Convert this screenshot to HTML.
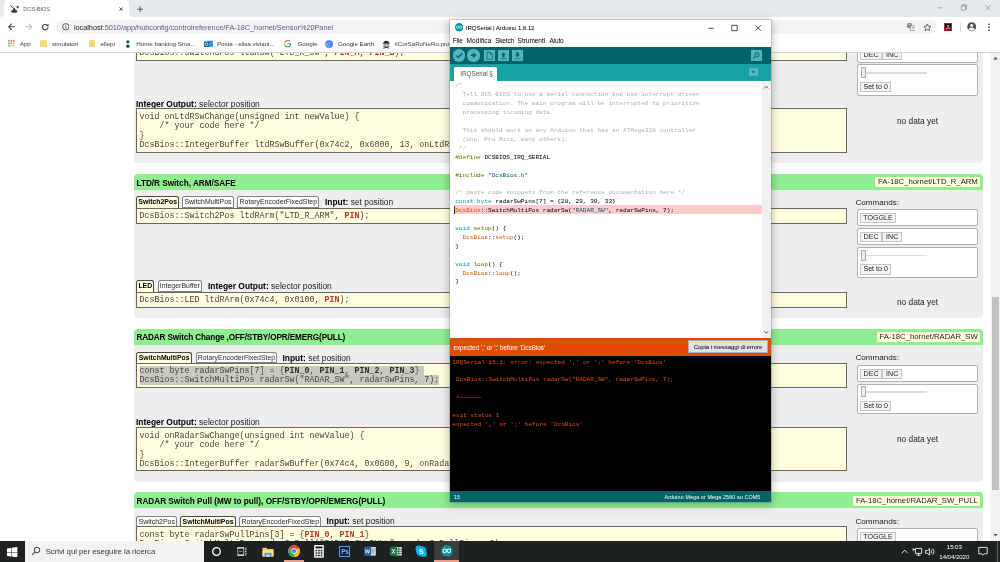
<!DOCTYPE html>
<html><head><meta charset="utf-8"><title>DCS-BIOS</title>
<style>
*{box-sizing:border-box;margin:0;padding:0}
html,body{width:1000px;height:562px;overflow:hidden;background:#fff;font-family:"Liberation Sans",sans-serif;}
body{position:relative;will-change:transform}
.abs{position:absolute}
/* ---------- chrome frame ---------- */
#tabstrip{position:absolute;left:0;top:0;width:1000px;height:17px;background:#e7eaed}
#tab{position:absolute;left:4.2px;top:0px;width:125px;height:17px;background:#fff;border-radius:4px 4px 0 0}
#tab:before,#tab:after{content:'';position:absolute;bottom:0;width:4px;height:4px;background:radial-gradient(circle at 0 0,#e7eaed 3.8px,#fff 4.2px)}
#tab:before{left:-4px}
#tab:after{right:-4px;background:radial-gradient(circle at 100% 0,#e7eaed 3.8px,#fff 4.2px)}
#tab span{position:absolute;left:19.100px;top:5.5px;font-size:5.72px;color:#63666a;letter-spacing:-0.1px}
#toolbar{position:absolute;left:0;top:17px;width:1000px;height:19px;background:#fff}
#omni{position:absolute;left:56.1px;top:3.3px;width:880.6px;height:13.4px;border-radius:7px;background:#f1f3f4}
#url{position:absolute;left:17.8px;top:2.4px;font-size:7.33px;color:#5f6368;white-space:nowrap;letter-spacing:-0.02px}
#url b{font-weight:normal;color:#202124}
#bookmarks{position:absolute;left:0;top:36px;width:1000px;height:16.9px;background:#fff;border-bottom:0.8px solid #d4d4d4}
.bm{position:absolute;top:4px;font-size:6.25px;color:#3c4043;white-space:nowrap;letter-spacing:-0.05px}
.fold{position:absolute;top:4.2px;width:6.4px;height:7.2px;background:#f8d775;border-radius:0.8px}
/* ---------- page ---------- */
#page{position:absolute;left:0;top:0;width:991px;height:541px;background:#fff;overflow:hidden}
#sb{position:absolute;left:991px;top:52px;width:9px;height:489px;background:#f1f1f1}
#sb i{position:absolute;left:1px;width:7px;top:245px;height:193px;background:#c1c1c1}
.card{position:absolute;left:133.6px;width:849.2px;background:#eee;border-radius:0 0 4px 4px}
.hdr{position:absolute;left:133.6px;width:849.2px;height:16px;background:#90ee90;border-radius:4px 4px 0 0}
.hdr b{position:absolute;left:2.9px;top:4.0px;font-size:8.2px;color:#000;white-space:nowrap}
.hdr span{position:absolute;right:2.5px;top:3.3px;height:10px;padding:0 2.5px;background:#ffffe0;font-size:7.72px;line-height:10.5px;border-radius:1px;white-space:nowrap;color:#222}
.code{position:absolute;left:136px;width:711px;background:#ffffe0;border:1px solid #686868;font-family:"Liberation Mono",monospace;font-size:8.33px;line-height:9.45px;color:#454545;white-space:pre;padding:2.6px 0 0 2.5px;overflow:hidden}
.code em{font-style:normal;font-weight:bold;color:#c0392b}
.lbl{position:absolute;font-size:8.42px;color:#222;white-space:nowrap}
.lbl b{color:#000}
.tabb{position:absolute;height:11.6px;border:1px solid #858585;border-radius:2.5px 2.5px 0.5px 0.5px;background:#fdfdfd;font-size:6.95px;line-height:10.6px;padding:0;color:#2a2a2a;text-align:center;white-space:nowrap}
.tabb.on{height:12.8px;border-bottom:none;border-radius:2.5px 2.5px 0 0;background:#ffffe0;font-weight:bold;color:#000;border-color:#4a4a4a;font-size:6.9px}
.cbox{position:absolute;left:857.4px;width:120.8px;background:#fff;border:1px solid #b0b0b0;border-radius:2px}
.btn{position:absolute;height:10.4px;border:1px solid #c4c4c4;background:#f4f4f4;font-size:7.1px;line-height:9.6px;padding:0;text-align:center;color:#222;white-space:nowrap}
.code u{text-decoration:none;background:#c9c9bf}
.code u em{color:#2e2e2e}
.sl{position:absolute;left:3px;top:6.8px;width:66px;height:1.4px;background:#dcdcdc}
.sl i{position:absolute;left:-0.8px;top:-5px;width:5.2px;height:10.8px;background:#ececec;border:0.8px solid #aaa;border-radius:0.5px}
.nodata{position:absolute;left:897px;font-size:8.3px;color:#222;white-space:nowrap}

svg{display:block}
/* ---------- arduino ---------- */
#ard{position:absolute;left:450.4px;top:19.6px;width:320.6px;height:482.8px;background:#fff;box-shadow:0 0 0 0.6px rgba(90,90,90,.38),0 2px 9px 1px rgba(0,0,0,.26);overflow:hidden}
#ard .title{position:absolute;left:15.4px;top:4.6px;font-size:6.2px;color:#000;white-space:nowrap;letter-spacing:-0.12px}
#ard .menu{position:absolute;top:17.2px;font-size:6.5px;color:#000;white-space:nowrap;letter-spacing:-0.12px}
#ard .tb{position:absolute;left:0;top:27.4px;width:100%;height:16.6px;background:#006468}
#ard .tabs{position:absolute;left:0;top:44px;width:100%;height:17.2px;background:#17a1a5}
#ard .tabs .t{position:absolute;left:3.6px;top:3.2px;width:43px;height:14.5px;background:#fff;border-radius:1.5px 1.5px 0 0;font-size:6.4px;color:#555;line-height:13px;padding-left:6.3px;white-space:nowrap;letter-spacing:-0.05px}
.cb{position:absolute;top:2.2px;width:12.4px;height:12.4px;border-radius:50%;background:#54b6ba}
.sq{position:absolute;top:3px;width:11px;height:11px;background:#54b6ba}
#ed{position:absolute;left:0;top:61.2px;width:312px;height:257.5px;background:#fff;font-family:"Liberation Mono",monospace;font-size:6.09px;line-height:8.9px;white-space:pre;color:#000;padding:1.7px 0 0 4.8px;overflow:hidden}
#ed .c{color:#a9b0b0}
#ed .k{color:#00979c}
#ed .p{color:#5e6d03}
#ed .o{color:#d35400}
#ed .s{color:#005c5f}
#ed .err{}
#ed .band{position:absolute;left:3.8px;top:124.6px;width:307.8px;height:8.8px;background:#ffcccc}
#ed .band i{position:absolute;left:0;top:0.6px;width:0.9px;height:7.8px;background:#4a2a10}
#ed span{position:relative}
#edsb{position:absolute;left:312px;top:61.2px;width:8.6px;height:257.5px;background:#f0f0f0}
#stat{position:absolute;left:0;top:318.7px;width:100%;height:17.5px;background:#e34c00}
#stat span{position:absolute;left:3px;top:5.5px;font-size:6.45px;color:#fff;white-space:nowrap;letter-spacing:-0.05px}
#stat div{position:absolute;left:237.2px;top:1.9px;width:80.8px;height:12.8px;background:#e1e1e1;border:0.6px solid #adadad;font-size:6.1px;line-height:11px;text-align:center;color:#000;white-space:nowrap;letter-spacing:-0.1px}
#con{position:absolute;left:0;top:336.2px;width:100%;height:135px;background:#000;font-family:"Liberation Mono",monospace;font-size:6.06px;line-height:8.9px;white-space:pre;color:#e34c00;padding:2.8px 0 0 1.9px;overflow:hidden}
#foot{position:absolute;left:0;top:471.1px;width:100%;height:11.7px;background:#006468;font-size:5.4px;color:#fff;white-space:nowrap;letter-spacing:0.1px}
#foot span{position:absolute;top:3.2px}

/* ---------- taskbar ---------- */
#taskbar{position:absolute;left:0;top:541.2px;width:1000px;height:20.8px;background:#1e2122;overflow:hidden}
#search{position:absolute;left:25px;top:0;width:179.3px;height:20.8px;background:#f2f2f2}
#search span{position:absolute;left:20.7px;top:6.1px;font-size:7.9px;color:#3a3a3a;white-space:nowrap;letter-spacing:-0.08px}
#taskbar .ul{position:absolute;top:19.3px;height:1.5px;background:#e9a08f}
#taskbar .tt{position:absolute;font-size:6.1px;color:#fff;white-space:nowrap;text-align:center;width:40px;left:934.3px;letter-spacing:-0.05px}
</style></head><body>
<!-- PAGE -->
<div id="page">
<!-- section 0 (cut off at top) -->
<div class="card" style="top:40px;height:123px"></div>
<div class="code" style="top:45.1px;height:15.6px">DcsBios::Switch3Pos ltdRSw("LTD_R_SW", <em>PIN_A</em>, <em>PIN_B</em>);</div>
<div class="cbox" style="top:46.2px;height:16.6px"><div class="btn" style="left:1.700px;top:2.7px;width:22px">DEC</div><div class="btn" style="left:23.700px;top:2.7px;width:20.2px">INC</div></div>
<div class="cbox" style="top:64.4px;height:31.6px"><div class="sl"><i></i></div><div class="btn" style="left:1.700px;top:16.3px;width:31.200px">Set to 0</div></div>
<div class="lbl" style="left:136px;top:98.5px"><b>Integer Output:</b> selector position</div>
<div class="code" style="top:108px;height:45px;padding-top:3.6px">void onLtdRSwChange(unsigned int newValue) {
    /* your code here */
}
DcsBios::IntegerBuffer ltdRSwBuffer(0x74c2, 0x6000, 13, onLtdRSwChange);</div>
<div class="nodata" style="top:115.500px">no data yet</div>

<!-- section 1 LTD/R -->
<div class="hdr" style="top:174px"><b style="top:4.6px">LTD/R Switch, ARM/SAFE</b><span>FA-18C_hornet/LTD_R_ARM</span></div>
<div class="card" style="top:190px;height:128px"></div>
<div class="tabb on" style="left:136.3px;top:196.3px;width:42.7px">Switch2Pos</div>
<div class="tabb" style="left:182.4px;top:196.3px;width:51.2px">SwitchMultiPos</div>
<div class="tabb" style="left:237.4px;top:196.3px;width:81.8px">RotaryEncoderFixedStep</div>
<div class="lbl" style="left:325px;top:197px"><b>Input:</b> set position</div>
<div class="code" style="top:208px;height:15.5px;padding-top:3.4px">DcsBios::Switch2Pos ltdRArm("LTD_R_ARM", <em>PIN</em>);</div>
<div class="lbl" style="left:855.5px;top:198.0px;font-size:8.1px">Commands:</div>
<div class="cbox" style="top:209.2px;height:16.8px"><div class="btn" style="left:1.700px;top:2.7px;width:35.9px">TOGGLE</div></div>
<div class="cbox" style="top:228.4px;height:16.4px"><div class="btn" style="left:1.700px;top:2.7px;width:22px">DEC</div><div class="btn" style="left:23.700px;top:2.7px;width:20.2px">INC</div></div>
<div class="cbox" style="top:247.2px;height:30.8px"><div class="sl"><i></i></div><div class="btn" style="left:1.700px;top:16.3px;width:31.200px">Set to 0</div></div>
<div class="tabb on" style="left:136.3px;top:280px;width:18px">LED</div>
<div class="tabb" style="left:158px;top:280px;width:43.6px">IntegerBuffer</div>
<div class="lbl" style="left:208px;top:281px"><b>Integer Output:</b> selector position</div>
<div class="code" style="top:292px;height:15.5px;padding-top:3.0px">DcsBios::LED ltdRArm(0x74c4, 0x0100, <em>PIN</em>);</div>
<div class="nodata" style="top:297px">no data yet</div>

<!-- section 2 RADAR -->
<div class="hdr" style="top:328.7px"><b style="letter-spacing:-0.135px">RADAR Switch Change ,OFF/STBY/OPR/EMERG(PULL)</b><span>FA-18C_hornet/RADAR_SW</span></div>
<div class="card" style="top:344.7px;height:137.3px"></div>
<div class="tabb on" style="left:136.3px;top:351.5px;width:55.7px">SwitchMultiPos</div>
<div class="tabb" style="left:195.5px;top:351.5px;width:81.8px">RotaryEncoderFixedStep</div>
<div class="lbl" style="left:282.5px;top:352.5px"><b>Input:</b> set position</div>
<div class="code" style="top:363.2px;height:25.2px"><u>const byte radarSwPins[7] = {<em>PIN_0</em>, <em>PIN_1</em>, <em>PIN_2</em>, <em>PIN_3</em>} </u>
<u>DcsBios::SwitchMultiPos radarSw("RADAR_SW", radarSwPins, 7);</u></div>
<div class="lbl" style="left:855.5px;top:353.0px;font-size:8.1px">Commands:</div>
<div class="cbox" style="top:365px;height:16.5px"><div class="btn" style="left:1.700px;top:2.7px;width:22px">DEC</div><div class="btn" style="left:23.700px;top:2.7px;width:20.2px">INC</div></div>
<div class="cbox" style="top:383.700px;height:30.8px"><div class="sl"><i></i></div><div class="btn" style="left:1.700px;top:16.3px;width:31.200px">Set to 0</div></div>
<div class="lbl" style="left:136px;top:417.1px"><b>Integer Output:</b> selector position</div>
<div class="code" style="top:427px;height:44px;padding-top:3.7px">void onRadarSwChange(unsigned int newValue) {
    /* your code here */
}
DcsBios::IntegerBuffer radarSwBuffer(0x74c4, 0x0600, 9, onRadarSwChange);</div>
<div class="nodata" style="top:434px">no data yet</div>

<!-- section 3 RADAR PULL -->
<div class="hdr" style="top:492.4px"><b style="top:4.7px">RADAR Switch Pull (MW to pull), OFF/STBY/OPR/EMERG(PULL)</b><span>FA-18C_hornet/RADAR_SW_PULL</span></div>
<div class="card" style="top:508.4px;height:40px"></div>
<div class="tabb" style="left:136.3px;top:515.5px;width:41px">Switch2Pos</div>
<div class="tabb on" style="left:180.2px;top:515.5px;width:55.7px">SwitchMultiPos</div>
<div class="tabb" style="left:239.4px;top:515.5px;width:81.8px">RotaryEncoderFixedStep</div>
<div class="lbl" style="left:326.5px;top:516px"><b>Input:</b> set position</div>
<div class="code" style="top:526.2px;height:25px;padding-top:3.6px">const byte radarSwPullPins[3] = {<em>PIN_0</em>, <em>PIN_1</em>}
DcsBios::SwitchMultiPos radarSwPull("RADAR_SW_PULL", radarSwPullPins, 3);</div>
<div class="lbl" style="left:855.5px;top:516.5px;font-size:8.1px">Commands:</div>
<div class="cbox" style="top:528px;height:16.5px"><div class="btn" style="left:1.700px;top:2.7px;width:35.9px">TOGGLE</div></div>
</div>
<div id="sb"><i></i><svg class="abs" style="left:0;top:0" width="9" height="489" viewBox="0 0 9 489"><path d="M2.400 7.400l2.100-2.600 2.100 2.600zM2.400 482l2.100 2.600 2.100-2.600z" fill="#505050"/></svg></div>
<!-- CHROME -->
<div id="tabstrip"><div id="tab">
<svg class="abs" style="left:6.200px;top:4.800px" width="8.600" height="8.200" viewBox="0 0 17 16"><path d="M0.800 0.800L9.500 8.500" stroke="#2e2e2e" stroke-width="1.900"/><path d="M15.200 1.400v5.200M12.600 4h5.200" stroke="#2e2e2e" stroke-width="1.500"/><circle cx="15.200" cy="4" r="1.400" fill="#2e2e2e"/><ellipse cx="8.400" cy="12.700" rx="6.300" ry="2.700" fill="#3a3a3a"/><circle cx="8.200" cy="8.800" r="2.700" fill="#3a3a3a"/></svg>
<span>DCS-BIOS</span>
<svg class="abs" style="left:114.600px;top:6.700px" width="4.200" height="4.200" viewBox="0 0 10 10"><path d="M1 1l8 8M9 1l-8 8" stroke="#4a4a4a" stroke-width="2.200"/></svg>
</div>
<svg class="abs" style="left:137.400px;top:5.600px" width="6.400" height="6.400" viewBox="0 0 12 12"><path d="M6 0.500v11M0.500 6h11" stroke="#3c4043" stroke-width="1.500"/></svg>
<svg class="abs" style="left:930px;top:0" width="70" height="16" viewBox="0 0 70 16"><path d="M7.600 7.800h5.200M31.300 5.900h4.200v4.200h-4.200zM32.400 5.900v-1.100h4.200v4.200h-1.100M55.300 5.200l5.200 5.200M60.500 5.200l-5.200 5.200" stroke="#8b8e93" stroke-width="0.750" fill="none"/></svg>
</div>
<div id="toolbar">
<svg class="abs" style="left:7.600px;top:6.200px" width="7.600" height="7.600" viewBox="0 0 16 16"><path d="M15 8h-13M8 1.500l-6.500 6.500 6.500 6.500" stroke="#464a4e" stroke-width="2.400" fill="none"/></svg>
<svg class="abs" style="left:24.600px;top:6.200px" width="7.600" height="7.600" viewBox="0 0 16 16"><path d="M1 8h13M8 1.500l6.500 6.500-6.500 6.500" stroke="#babcbe" stroke-width="2.400" fill="none"/></svg>
<svg class="abs" style="left:40.600px;top:5.800px" width="8.400" height="8.400" viewBox="0 0 16 16"><path d="M13.200 8a5.200 5.200 0 1 1-1.600-3.700" stroke="#464a4e" stroke-width="2.300" fill="none"/><path d="M14.400 1v5.400h-5.400z" fill="#464a4e"/></svg>
<div id="omni">
<svg class="abs" style="left:5.600px;top:2.900px" width="7.600" height="7.600" viewBox="0 0 16 16"><circle cx="8" cy="8" r="6.800" stroke="#4a4d51" stroke-width="1.900" fill="none"/><path d="M8 7v4.800" stroke="#4a4d51" stroke-width="1.700"/><circle cx="8" cy="4.600" r="1" fill="#4a4d51"/></svg>
<div id="url"><b>localhost</b>:5010/app/hubconfig/controlreference/FA-18C_hornet/Sensor%20Panel</div>
<svg class="abs" style="left:850.500px;top:2.700px" width="8.400" height="8" viewBox="0 0 17 16"><rect x="0.500" y="0.500" width="9" height="9" rx="1" fill="#6b6f74"/><rect x="7" y="5.500" width="9.500" height="10" rx="1" fill="#fff" stroke="#6b6f74" stroke-width="1.300"/><path d="M9.500 9h5M12 9v4.500" stroke="#6b6f74" stroke-width="1.100"/><path d="M2.500 3h5M5 3v4" stroke="#fff" stroke-width="1"/></svg>
<svg class="abs" style="left:867.400px;top:2.500px" width="8.800" height="8.400" viewBox="0 0 24 23"><path d="M12 2.500l2.900 6.300 6.800.8-5 4.700 1.300 6.800-6-3.400-6 3.400 1.300-6.800-5-4.700 6.800-.8z" stroke="#4a4d51" stroke-width="2.300" fill="none" stroke-linejoin="round"/></svg>
</div>
<div class="abs" style="left:944.200px;top:6px;width:8.200px;height:8.200px;background:#2a0a0a;border:0.700px solid #b3202a"></div>
<svg class="abs" style="left:945.200px;top:7px" width="6.200" height="6.200" viewBox="0 0 12 12"><path d="M1.500 10.500c3-1.500 4.500-5 4.500-8.500c0 3.500 2 6 4.500 6.500c-3-.5-6 0-9 2z" stroke="#fff" stroke-width="1.100" fill="none"/></svg>
<div class="abs" style="left:960.200px;top:5.500px;width:0.600px;height:9px;background:#d5d7da"></div>
<svg class="abs" style="left:967.200px;top:5.400px" width="9.400" height="9.400" viewBox="0 0 20 20"><circle cx="10" cy="10" r="9.500" fill="#4f5357"/><circle cx="10" cy="7.600" r="3.300" fill="#fff"/><path d="M3.600 15.500c1.500-4 11.300-4 12.800 0a8.200 8.200 0 0 1-12.800 0z" fill="#fff"/></svg>
<svg class="abs" style="left:987.600px;top:5.800px" width="2" height="8.400" viewBox="0 0 4 17"><circle cx="2" cy="2.500" r="1.700" fill="#4a4d51"/><circle cx="2" cy="8.500" r="1.700" fill="#4a4d51"/><circle cx="2" cy="14.500" r="1.700" fill="#4a4d51"/></svg>
</div>
<div id="bookmarks">
<svg class="abs" style="left:7.800px;top:4.200px" width="6.800" height="6.800" viewBox="0 0 14 14"><g><rect x="0.500" y="0.500" width="3" height="3" fill="#ea4335"/><rect x="5.500" y="0.500" width="3" height="3" fill="#ea4335"/><rect x="10.500" y="0.500" width="3" height="3" fill="#ea4335"/><rect x="0.500" y="5.500" width="3" height="3" fill="#34a853"/><rect x="5.500" y="5.500" width="3" height="3" fill="#4285f4"/><rect x="10.500" y="5.500" width="3" height="3" fill="#fbbc05"/><rect x="0.500" y="10.500" width="3" height="3" fill="#34a853"/><rect x="5.500" y="10.500" width="3" height="3" fill="#fbbc05"/><rect x="10.500" y="10.500" width="3" height="3" fill="#fbbc05"/></g></svg>
<div class="bm" style="left:19.800px">App</div>
<div class="fold" style="left:40.300px"></div><div class="bm" style="left:51.900px">simulatori</div>
<div class="fold" style="left:88.900px"></div><div class="bm" style="left:100.600px">ellepi</div>
<svg class="abs" style="left:126.200px;top:3.700px" width="3.800" height="8.400" viewBox="0 0 8 17"><circle cx="4" cy="3.600" r="3.200" fill="#0b4f5c"/><circle cx="4" cy="12.600" r="3.600" fill="#0b4f5c"/></svg>
<div class="bm" style="left:136.300px">Home banking Sma...</div>
<svg class="abs" style="left:203.600px;top:3.900px" width="9" height="8" viewBox="0 0 18 16"><rect x="6" y="1.500" width="12" height="12" fill="#1a8fe0"/><path d="M6 5l6 4 6-4" stroke="#9fd3f7" stroke-width="1.200" fill="none"/><rect x="0" y="3" width="10" height="11" fill="#0f63b8"/><circle cx="5" cy="8.500" r="2.600" stroke="#fff" stroke-width="1.500" fill="none"/></svg>
<div class="bm" style="left:217px">Posta - elisa.viviani...</div>
<svg class="abs" style="left:283.800px;top:4.200px" width="7.400" height="7.400" viewBox="0 0 16 16"><path d="M8 1.200A6.800 6.800 0 0 1 12.800 3.200" stroke="#ea4335" stroke-width="2.400" fill="none"/><path d="M8 1.200A6.800 6.800 0 0 0 2.200 4.400" stroke="#ea4335" stroke-width="2.400" fill="none"/><path d="M2.200 4.400A6.800 6.800 0 0 0 2.200 11.600" stroke="#fbbc05" stroke-width="2.400" fill="none"/><path d="M2.200 11.600A6.800 6.800 0 0 0 12.600 13" stroke="#34a853" stroke-width="2.400" fill="none"/><path d="M12.600 13A6.800 6.800 0 0 0 14.800 8h-6.600" stroke="#4285f4" stroke-width="2.400" fill="none"/></svg>
<div class="bm" style="left:297.500px">Google</div>
<svg class="abs" style="left:325.400px;top:3.900px" width="8.200" height="8.200" viewBox="0 0 16 16"><circle cx="8" cy="8" r="7.600" fill="#3f7ee8"/><path d="M0.800 10c2.500-4.500 7-6.500 12-5.500c-5 .5-8 3.500-9.500 9a7.600 7.600 0 0 1-2.500-3.500z" fill="#9cc0fb"/><path d="M5 14.500c1.500-4 4.500-6.500 9.500-7c-4 1.500-6 4-7 8z" fill="#9cc0fb" opacity=".7"/></svg>
<div class="bm" style="left:338px">Google Earth</div>
<svg class="abs" style="left:382px;top:3.500px" width="8.600" height="9" viewBox="0 0 17 18"><path d="M2.500 6.500c0-7 12-7 12 0z" fill="#2b2b2b"/><path d="M1.500 6.500h14" stroke="#2b2b2b" stroke-width="1.600"/><path d="M4 7.500h9v3.500c0 3.500-9 3.500-9 0z" fill="#fff" stroke="#2b2b2b" stroke-width="0.900"/><circle cx="6.500" cy="9.800" r="1.200" fill="#2b2b2b"/><circle cx="10.500" cy="9.800" r="1.200" fill="#2b2b2b"/><path d="M2.500 16.500l12-3.500M2.500 13l12 3.500" stroke="#2b2b2b" stroke-width="1.500"/></svg>
<div class="bm" style="left:395px">ilCorSaRoNeRo.pro...</div>
</div>
<!-- ARDUINO -->
<div id="ard">
<svg class="abs" style="left:4.2px;top:3.9px" width="8.4" height="8.4" viewBox="0 0 20 20"><circle cx="10" cy="10" r="10" fill="#00979c"/><path d="M3.5 10c0-4 5-4 6.5 0s6.500 4 6.500 0s-5-4-6.500 0s-6.500 4-6.500 0z" fill="none" stroke="#fff" stroke-width="1.7"/></svg>
<div class="title">IRQSerial | Arduino 1.8.12</div>
<svg class="abs" style="left:255px;top:0" width="66" height="16" viewBox="0 0 66 16"><path d="M3.300 8.300h5.200M26.800 5.300h5.400v5.400h-5.400zM50.500 5.300l5.400 5.400M55.900 5.300l-5.400 5.400" stroke="#111" stroke-width="0.75" fill="none"/></svg>
<div class="menu" style="left:2.3px">File</div><div class="menu" style="left:16.2px;letter-spacing:0.07px">Modifica</div><div class="menu" style="left:44.8px;letter-spacing:-0.2px">Sketch</div><div class="menu" style="left:67.2px;letter-spacing:-0.03px">Strumenti</div><div class="menu" style="left:99px">Aiuto</div>
<div class="tb">
<div class="cb" style="left:2.4px"><svg width="12.4" height="12.400" viewBox="0 0 24 24"><path d="M6.500 12.500l3.800 3.800 7.500-8" stroke="#006468" stroke-width="2.900" fill="none"/></svg></div>
<div class="cb" style="left:16.8px"><svg width="12.4" height="12.400" viewBox="0 0 24 24"><path d="M7.200 12h7.500M11.800 7.800l4.400 4.200-4.400 4.200" stroke="#006468" stroke-width="3" fill="none"/></svg></div>
<div class="sq" style="left:33.8px"><svg width="11" height="11" viewBox="0 0 22 22"><path d="M6 4h6.500l4 4v10.500h-10.500zM12.500 4v4h4" stroke="#006468" stroke-width="1.500" fill="none"/></svg></div>
<div class="sq" style="left:47.8px"><svg width="11" height="11" viewBox="0 0 22 22"><path d="M11 4.500l5 5.500h-3v5h-4v-5h-3z" fill="#006468"/><path d="M4.500 17.500h13" stroke="#006468" stroke-width="1.300"/></svg></div>
<div class="sq" style="left:62px"><svg width="11" height="11" viewBox="0 0 22 22"><path d="M11 14.500l5-5.500h-3v-5h-4v5h-3z" fill="#006468"/><path d="M4.500 17.500h13" stroke="#006468" stroke-width="1.300"/></svg></div>
<div class="sq" style="left:300.6px;top:2.9px"><svg width="11" height="11" viewBox="0 0 22 22"><circle cx="12" cy="9.500" r="4.300" stroke="#006468" stroke-width="1.800" fill="none"/><path d="M8.800 12.800l-4 4" stroke="#006468" stroke-width="2.200"/><circle cx="12" cy="9.500" r="1" fill="#006468"/></svg></div>
</div>
<div class="tabs"><div class="t">IRQSerial §</div>
<div class="abs" style="left:299px;top:4.400px;width:8.600px;height:8px;background:#54b6ba"><svg width="8.600" height="8" viewBox="0 0 17 16"><path d="M5 6.500h7l-3.500 4z" fill="#006468"/></svg></div>
</div>
<div id="ed"><div class="band"><i></i></div><span class="c">/*
  Tell DCS-BIOS to use a serial connection and use interrupt-driven
  communication. The main program will be interrupted to prioritize
  processing incoming data.
  
  This should work on any Arduino that has an ATMega328 controller
  (Uno, Pro Mini, many others).
 */</span>
<span class="p">#define</span> DCSBIOS_IRQ_SERIAL

<span class="p">#include</span> <span class="s">"DcsBios.h"</span>

<span class="c">/* paste code snippets from the reference documentation here */</span>
<span class="k">const</span> <span class="k">byte</span> radarSwPins[7] = {28, 29, 30, 33}
<span class="err"><span class="o">DcsBios</span>::SwitchMultiPos radarSw(<span class="s">"RADAR_SW"</span>, radarSwPins, 7);</span>

<span class="k">void</span> <span class="p">setup</span>() {
  <span class="o">DcsBios</span>::<span class="o">setup</span>();
}

<span class="k">void</span> <span class="p">loop</span>() {
  <span class="o">DcsBios</span>::<span class="o">loop</span>();
}</div>
<div id="edsb"><svg class="abs" style="left:0;top:0" width="8.600" height="257.500" viewBox="0 0 8.600 257.500"><path d="M2.300 7.300l2-2 2 2M2.300 250.300l2 2 2-2" stroke="#444" stroke-width="0.9" fill="none"/></svg></div>
<div id="stat"><span>expected ',' or ';' before 'DcsBios'</span><div>Copia i messaggi di errore</div></div>
<div id="con">IRQSerial:15:1: error: expected ',' or ';' before 'DcsBios'

 DcsBios::SwitchMultiPos radarSw("RADAR_SW", radarSwPins, 7);

 ^~~~~~~

exit status 1
expected ',' or ';' before 'DcsBios'</div>
<div id="foot"><span style="left:3.6px">15</span><span style="right:10.6px">Arduino Mega or Mega 2560 su COM5</span></div>
</div>
<!-- TASKBAR -->
<div id="taskbar">
<svg class="abs" style="left:7.4px;top:5.6px" width="10.400" height="10.400" viewBox="0 0 20 20"><path d="M0 2.800l8.200-1.100v7.900h-8.200zM9.200 1.500l10.800-1.500v9.600h-10.800zM0 10.600h8.200v7.900l-8.200-1.100zM9.200 10.600h10.800v9.400l-10.800-1.500z" fill="#fff"/></svg>
<div id="search"><svg class="abs" style="left:5.800px;top:5.200px" width="10" height="10" viewBox="0 0 18 18"><circle cx="10.800" cy="7.200" r="5" stroke="#333" stroke-width="1.700" fill="none"/><path d="M7.200 10.800l-5.400 5.400" stroke="#333" stroke-width="1.900"/></svg><span>Scrivi qui per eseguire la ricerca</span></div>
<!-- cortana -->
<svg class="abs" style="left:211.300px;top:4.900px" width="11" height="11" viewBox="0 0 22 22"><circle cx="11" cy="11" r="7.600" stroke="#fff" stroke-width="2.600" fill="none"/></svg>
<!-- task view -->
<svg class="abs" style="left:236.600px;top:5.400px" width="10" height="9" viewBox="0 0 20 18"><path d="M1 1.800h13M1 16.200h13" stroke="#fff" stroke-width="2.400"/><path d="M1.600 1v16M13.400 1v16" stroke="#fff" stroke-width="1.200"/><path d="M4.500 9h6" stroke="#fff" stroke-width="1.600" opacity=".55"/><path d="M17.600 1v5.500M17.600 11.500v5.500" stroke="#fff" stroke-width="2.200" opacity=".75"/><circle cx="17.600" cy="9" r="1.300" fill="#fff"/></svg>
<!-- explorer -->
<svg class="abs" style="left:262px;top:5.400px" width="12" height="10.200" viewBox="0 0 24 20"><path d="M1 1.500h8l2 2.500h12v15h-22z" fill="#f5ce5e"/><path d="M1 6.500h22v12.500h-22z" fill="#fbe08a"/><path d="M5 11.500h14v7.500h-14z" fill="#3d9be0"/><path d="M8.500 15h7v4h-7z" fill="#fbe08a"/></svg>
<!-- chrome -->
<svg class="abs" style="left:287.600px;top:4.100px" width="12.200" height="12.200" viewBox="0 0 24 24"><circle cx="12" cy="12" r="11.500" fill="#fff"/><path d="M12 12L2.040 6.250A11.500 11.500 0 0 1 21.960 6.250z" fill="#ea4335"/><path d="M12 12L21.960 6.250A11.500 11.500 0 0 1 12 23.500z" fill="#fbbc05"/><path d="M12 12L12 23.500A11.500 11.500 0 0 1 2.040 6.250z" fill="#34a853"/><path d="M12 6.800h9.600" stroke="#ea4335" stroke-width="0"/><circle cx="12" cy="12" r="5.400" fill="#fff"/><circle cx="12" cy="12" r="4.200" fill="#4285f4"/></svg>
<div class="ul" style="left:283.600px;width:20.400px"></div>
<!-- calculator -->
<svg class="abs" style="left:314.400px;top:3.900px" width="9.900" height="12.700" viewBox="0 0 20 26"><rect x="0" y="0" width="20" height="26" rx="1.500" fill="#f4f4f4"/><rect x="3" y="3" width="14" height="4" fill="#222"/><g fill="#222"><rect x="3" y="10" width="3.500" height="3"/><rect x="8.250" y="10" width="3.500" height="3"/><rect x="13.500" y="10" width="3.500" height="3"/><rect x="3" y="15" width="3.500" height="3"/><rect x="8.250" y="15" width="3.500" height="3"/><rect x="13.500" y="15" width="3.500" height="3"/><rect x="3" y="20" width="3.500" height="3"/><rect x="8.250" y="20" width="3.500" height="3"/><rect x="13.500" y="20" width="3.500" height="3"/></g></svg>
<!-- photoshop -->
<div class="abs" style="left:339.200px;top:4.700px;width:11.200px;height:10.800px;background:#0b1c33;border:0.900px solid #3ea6f2;color:#6fc0ff;font-size:6.400px;font-weight:bold;line-height:9px;text-align:center;letter-spacing:-0.3px">Ps</div>
<!-- word -->
<svg class="abs" style="left:364.200px;top:4.900px" width="12" height="10.600" viewBox="0 0 24 21"><rect x="11" y="2" width="12.500" height="17" fill="#e9eef7"/><path d="M13 5.500h8.500M13 8.500h8.500M13 11.500h8.500M13 14.500h8.500" stroke="#2b579a" stroke-width="1.100"/><path d="M0 2l14-2v21l-14-2z" fill="#2b579a"/><path d="M3 6.500l1.700 8 2.300-7 2.300 7 1.700-8" stroke="#fff" stroke-width="1.600" fill="none"/></svg>
<!-- excel -->
<svg class="abs" style="left:389.800px;top:4.900px" width="12" height="10.600" viewBox="0 0 24 21"><rect x="11" y="2" width="12.500" height="17" fill="#e6f0e9"/><path d="M17.500 2v17M13 6.200h10.500M13 10.500h10.500M13 14.800h10.500" stroke="#217346" stroke-width="1.700"/><path d="M0 2l14-2v21l-14-2z" fill="#217346"/><path d="M4 6l6 9M10 6l-6 9" stroke="#fff" stroke-width="1.800" fill="none"/></svg>
<!-- skype -->
<svg class="abs" style="left:414.800px;top:4.100px" width="12.400" height="12.400" viewBox="0 0 24 24"><circle cx="7.500" cy="7.500" r="6.500" fill="#00aff0"/><circle cx="16.500" cy="16.500" r="6.500" fill="#00aff0"/><circle cx="12" cy="12" r="10" fill="#00aff0"/><text x="12" y="17.200" font-family="Liberation Sans" font-weight="bold" font-size="14.500" text-anchor="middle" fill="#fff">S</text></svg>
<!-- arduino (active) -->
<div class="abs" style="left:434.400px;top:0;width:24.600px;height:20.800px;background:#3c3c3c"></div>
<svg class="abs" style="left:441px;top:4.300px" width="11.600" height="11.600" viewBox="0 0 20 20"><circle cx="10" cy="10" r="10" fill="#00979c"/><path d="M3.500 10c0-4 5-4 6.500 0s6.500 4 6.500 0s-5-4-6.500 0s-6.500 4-6.500 0z" fill="none" stroke="#fff" stroke-width="1.800"/></svg>
<div class="ul" style="left:434.400px;width:24.600px"></div>
<!-- tray -->
<svg class="abs" style="left:900px;top:5px" width="90" height="12" viewBox="0 0 90 12"><g stroke="#fff" stroke-width="0.850" fill="none"><path d="M1.800 7.200l3-3 3 3"/><path d="M15.400 2.400h6.200v5h-6.200zM18.500 7.400v1.600M16.500 9.200h4M13.200 2v3.200M13.200 3.600h2"/><path d="M25.400 4.600h1.800l2.200-2v6.600l-2.200-2h-1.800zM31 3.800q1.400 1.800 0 3.600M32.800 2.600q2.400 3 0 6"/><path d="M78.800 1.400h8.400v6.400h-3l-1.200 1.400-1.200-1.400h-3z"/></g></svg>
<div class="tt" style="top:2.200px">15:03</div>
<div class="tt" style="top:11.500px">14/04/2020</div>
<div class="abs" style="left:997px;top:0;width:0.600px;height:20.800px;background:#5a5a5a"></div>
</div>
</body></html>
